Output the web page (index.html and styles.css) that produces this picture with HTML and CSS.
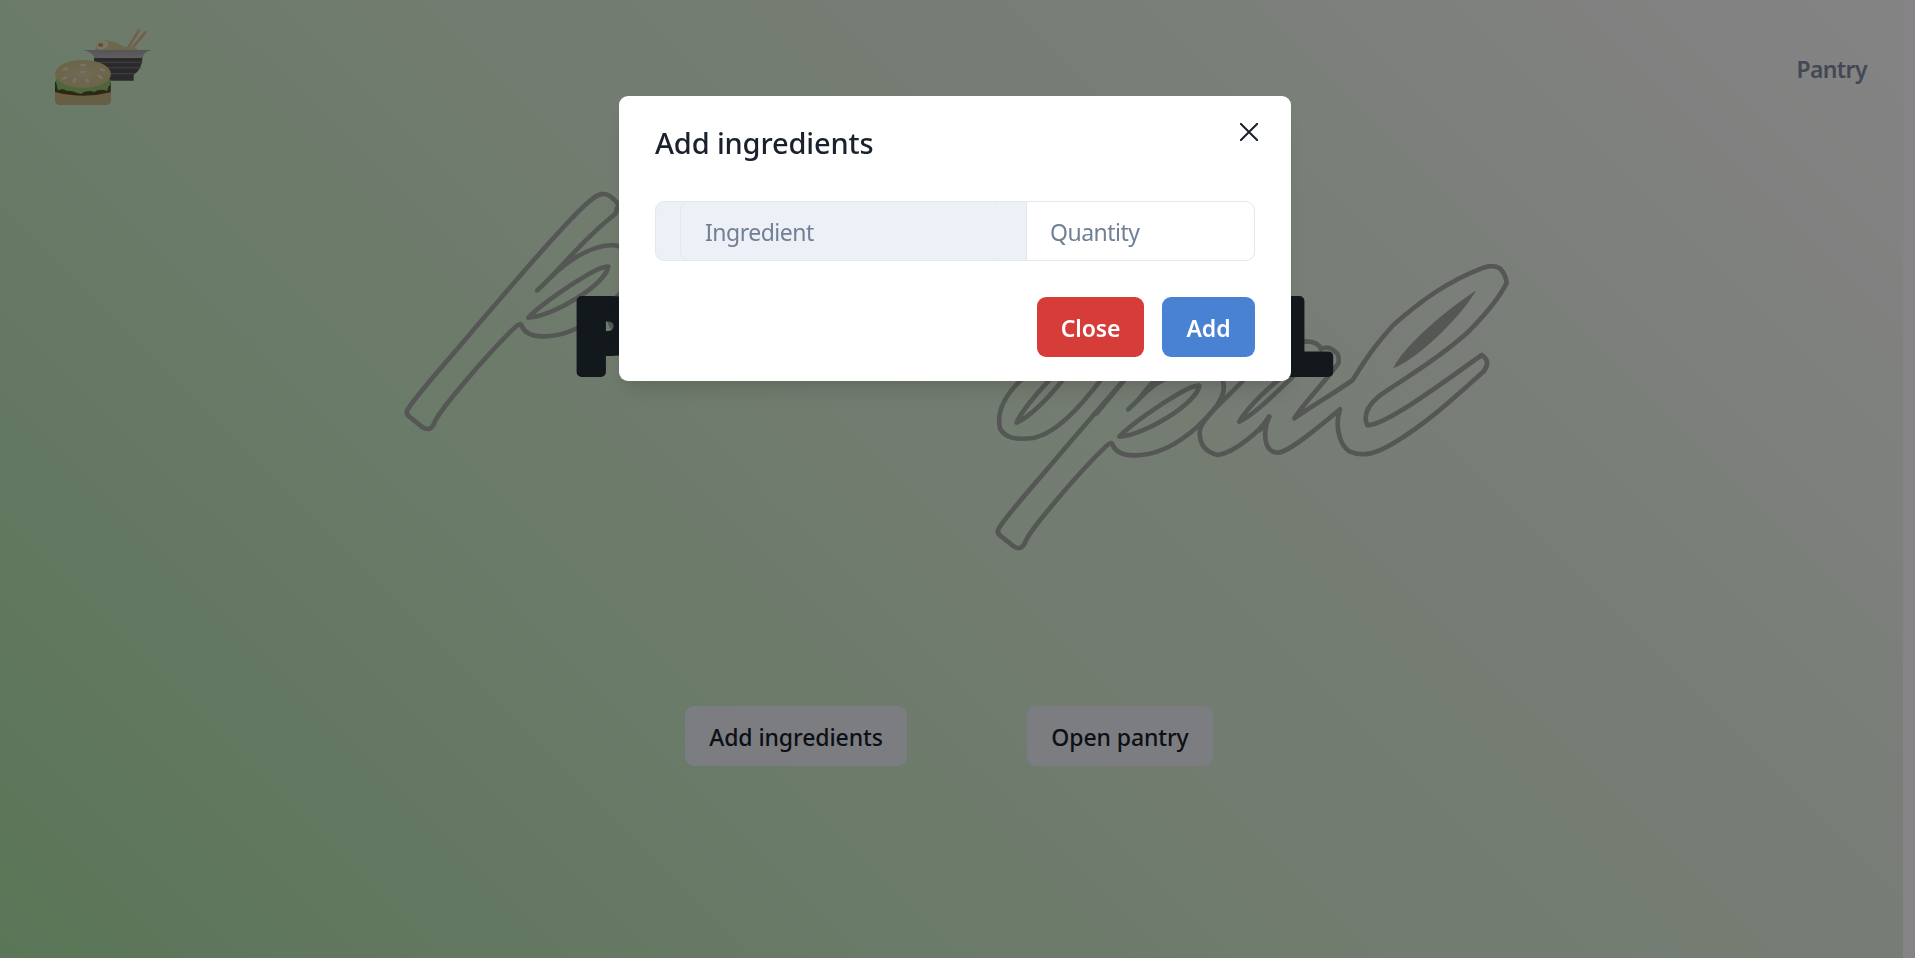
FILE: index.html
```html
<!DOCTYPE html>
<html lang="en">
<head>
<meta charset="utf-8">
<title>Pantry Pal</title>
<link rel="stylesheet" href="styles.css">
</head>
<body>
<div class="page">
  <header class="nav">
    <svg class="logo" viewBox="0 0 390 300" aria-hidden="true">
      <defs>
        <radialGradient id="bun"><stop offset="0" stop-color="#d9cba5"/><stop offset="1" stop-color="#cfc18a"/></radialGradient>
        <linearGradient id="rim" x2="0" y2="1"><stop offset="0" stop-color="#a4a3a8"/><stop offset="1" stop-color="#bab3bb"/></linearGradient>
      </defs>
      <path d="M265 82L296 32M278 82L316 37" class="stick"/>
      <path d="M167 90C165 70 178 61 200 61C235 65 240 78 260 81Q285 81 296 91Z" fill="#cfc795"/>
      <ellipse cx="187" cy="75" rx="19" ry="13" fill="#e4dfc8" transform="rotate(-18 187 75)"/>
      <ellipse cx="182" cy="75" rx="8" ry="6" fill="#d39250"/>
      <path d="M162 110H308Q305 150 281 164V182H196L162 150Z" fill="#514f55"/>
      <path d="M162 127H307M170 143H302M180 161H285" stroke="#77747b" stroke-width="4"/>
      <path d="M130 90H334Q310 96 307 114H163Q160 98 130 90Z" fill="url(#rim)"/>
      <path d="M45 185H213V240Q213 255 198 255H60Q45 255 45 240Z" fill="#c5b782"/>
      <path d="M45 185H212V217Q130 238 45 216Z" fill="#5d4b25"/>
      <path d="M46 178H211V194Q204 197 202 213Q180 204 163 216Q142 207 122 222Q96 211 78 212Q68 204 54 211Z" fill="#8ec773"/>
      <ellipse cx="129" cy="162" rx="84" ry="42" fill="url(#bun)"/>
      <g fill="#e3dcd2">
        <ellipse cx="129" cy="135" rx="9" ry="4"/><ellipse cx="129" cy="156" rx="9" ry="4"/>
        <ellipse cx="76" cy="147" rx="9" ry="4" transform="rotate(-18 76 147)"/><ellipse cx="187" cy="149" rx="9" ry="4" transform="rotate(18 187 149)"/>
        <ellipse cx="74" cy="174" rx="9" ry="4" transform="rotate(-18 74 174)"/><ellipse cx="180" cy="170" rx="9" ry="4" transform="rotate(30 180 170)"/>
        <ellipse cx="103" cy="181" rx="8" ry="4" transform="rotate(-45 103 181)"/><ellipse cx="142" cy="182" rx="8" ry="4" transform="rotate(55 142 182)"/>
      </g>
    </svg>
    <a class="nav-link">Pantry</a>
  </header>
  <main class="hero">
    <svg class="wordmark" viewBox="380 170 1150 400" role="img" aria-label="Pantry Pal">
      <defs>
        <g id="pa">
          <path d="M690 119C685 92 655 72 642 72C625 70 605 87 580 110C500 185 380 330 250 480C180 565 100 650 55 715Q45 730 58 740L98 772Q118 785 130 765C140 735 180 690 225 635C280 570 340 505 375 472Q392 455 395 468C405 490 430 500 462 499C560 500 650 420 697 363Q745 305 720 265Q705 227 668 225C600 227 540 270 500 305L442 361C520 290 570 215 672 135Q682 127 680 115"/>
          <path class="ink" d="M438 366C470 325 520 270 548 252L535 276C500 292 462 333 438 366Z"/>
          <path d="M415 443C450 405 540 345 600 310Q640 288 655 290C648 342 490 440 415 443Z"/>
          <path d="M785 276C740 325 655 393 656 430C656 470 675 488 710 498C760 493 840 423 865 383"/>
        </g>
      </defs>
      <g class="script">
        <use href="#pa" transform="translate(390 170) scale(.33333)"/>
        <use href="#pa" transform="translate(981 289) scale(.33333)"/>
        <g transform="translate(980 370) scale(.33333)">
          <path d="M125 28C70 80 50 130 60 175C75 205 110 210 160 204C230 190 300 110 364 28"/>
          <path d="M210 28C170 70 120 130 110 158C150 140 200 90 250 28"/>
          <path d="M435 28L350 130"/>
          <path class="ink" d="M442 122C480 75 500 45 520 28H565Q490 65 442 122Z"/>
          <path d="M935 0C870 45 800 115 778 155C830 130 900 55 960 0"/>
        </g>
        <g transform="translate(1260 250) scale(.33333)">
          <path d="M0 540L27 500L20 520C8 570 20 608 55 608C90 605 190 520 240 478C225 520 235 585 270 605C310 622 350 610 400 580C500 520 580 445 670 365Q695 335 665 315C560 390 380 525 322 526C310 500 320 470 355 440C400 405 520 340 620 250C690 180 725 130 740 98Q738 75 720 55C705 45 690 45 665 55C560 95 480 155 400 225C340 290 310 340 278 390C230 425 160 465 103 505C130 460 200 390 235 340Q240 315 225 305Q205 285 183 298Q175 275 140 274L100 280"/>
          <path class="ink" d="M403 352C430 290 560 180 645 125C600 200 480 320 403 352Z"/>
        </g>
      </g>
      <text class="title" x="577" y="372" textLength="754">PANTRYPAL</text>
    </svg>
    <div class="actions">
      <button class="btn btn-add">Add ingredients</button>
      <button class="btn btn-open">Open pantry</button>
    </div>
  </main>
</div>
<div class="overlay">
  <section class="modal" role="dialog">
    <header class="modal-head">
      <h2 class="modal-title">Add ingredients</h2>
      <svg class="x" viewBox="0 0 18 18" aria-label="Close"><path d="M.6.6L17.4 17.4M17.4.6L.6 17.4"/></svg>
    </header>
    <div class="fields">
      <div class="field-group"><div class="ingredient">Ingredient</div></div>
      <div class="quantity">Quantity</div>
    </div>
    <footer class="modal-foot">
      <button class="cta red">Close</button>
      <button class="cta blue">Add</button>
    </footer>
  </section>
</div>
</body>
</html>
```
FILE: styles.css
```css
* { box-sizing: border-box; }
body {
  margin: 0;
  height: 958px;
  overflow: hidden;
  background: #fffcff;
  font-family: "Noto Sans", "Open Sans", sans-serif;
  font-size: 23px;
  color: #1a202c;
}
.page {
  width: 1903px;
  height: 958px;
  background: linear-gradient(45deg, #ade1a7 0%, #ceebca 33.5%, #dbeed7 50%, #e3f0e0 66%, #fffcff 100%);
}
.nav {
  display: flex;
  justify-content: space-between;
  padding: 20px 36px 0 40px;
  height: 120px;
}
.logo { width: 130px; height: 100px; }
.stick { stroke: #dfb394; stroke-width: 8; stroke-linecap: round; }
.nav-link {
  margin-top: 33px;
  font-weight: 600;
  line-height: 32px;
  letter-spacing: -.6px;
  color: #808ca2;
}
.hero { padding-top: 50px; }
.wordmark { display: block; width: 1150px; height: 400px; margin-left: 380px; }
.script { fill: none; stroke: #a2a8a2; stroke-width: 14; stroke-linecap: round; stroke-linejoin: round; }
.ink { fill: #a2a8a2; stroke-width: 3; }
.title {
  font: 900 98px Inter, sans-serif;
  fill: #232f36;
  stroke: #232f36;
  stroke-width: 10;
  stroke-linejoin: round;
}
.actions { display: flex; gap: 120px; padding: 136px 0 0 685px; }
.btn, .cta {
  height: 60px;
  padding: 2px 0 0;
  border: 0;
  border-radius: 9px;
  font: 500 23px/58px "Noto Sans", sans-serif;
  letter-spacing: -.1px;
  color: #1a202c;
  background: #edf0f7;
  white-space: nowrap;
}
.btn-add { width: 222px; }
.btn-open { width: 186px; }
.overlay { position: fixed; inset: 0; background: rgba(0, 0, 0, .48); }
.modal {
  width: 672px;
  height: 285px;
  margin: 96px 0 0 619px;
  padding: 24px 36px;
  border-radius: 9px;
  background: #fff;
  box-shadow: 0 15px 22px -4px rgba(0, 0, 0, .1), 0 6px 9px -3px rgba(0, 0, 0, .06);
}
.modal-head { display: flex; justify-content: space-between; height: 81px; }
.modal-title { margin: 0; font-size: 29px; line-height: 45px; font-weight: 500; letter-spacing: -.15px; }
.x { width: 18px; height: 18px; margin: 3px -3px 0 0; fill: none; stroke: #1a202c; stroke-width: 2; stroke-linecap: round; }
.fields { display: flex; height: 60px; line-height: 60px; letter-spacing: -.5px; color: #718096; }
.field-group {
  width: 372px;
  padding-left: 24px;
  border: 1px solid #e2e8f0;
  border-radius: 9px 0 0 9px;
  background: #edf0f6;
}
.ingredient { width: 320px; height: 60px; margin-top: -1px; padding-left: 24px; border: 1px solid #e2e8f0; border-right-color: transparent; border-radius: 9px; }
.quantity { width: 229px; margin-left: -1px; padding-left: 24px; border: 1px solid #e2e8f0; border-left: 0; border-radius: 0 9px 9px 0; }
.modal-foot { display: flex; justify-content: flex-end; gap: 18px; padding-top: 36px; }
.cta { color: #fff; font-weight: 600; }
.red { width: 107px; background: #d73d38; }
.blue { width: 93px; background: #4982d3; }
```
